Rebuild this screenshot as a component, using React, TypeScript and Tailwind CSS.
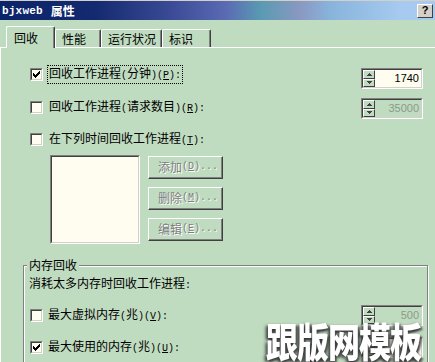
import React from "react";

const A = ({ children }: { children: React.ReactNode }) => (
  <span className="font-['Liberation_Mono',monospace] text-[10px]">{children}</span>
);

function Lbl({ main, inner, k }: { main: string; inner?: string; k: string }) {
  return (
    <span className="whitespace-nowrap">
      {main}
      {inner && (
        <>
          <A>(</A>
          {inner}
          <A>)</A>
        </>
      )}
      <A>
        (<u>{k}</u>):
      </A>
    </span>
  );
}

function Check({ checked }: { checked?: boolean }) {
  return (
    <div className="w-[13px] h-[13px] shrink-0 border border-t-[#808080] border-l-[#808080] border-b-white border-r-white">
      <div className="w-full h-full border border-t-[#404040] border-l-[#404040] border-b-[#d4d0c8] border-r-[#d4d0c8] bg-[#fffcf0] flex items-center justify-center">
        {checked && (
          <svg width="7" height="7" viewBox="0 0 7 7" shapeRendering="crispEdges">
            <path
              d="M6 0h1v1h-1z M5 1h2v1h-2z M0 2h1v1h-1z M4 2h3v1h-3z M0 3h2v1h-2z M3 3h3v1h-3z M0 4h5v1h-5z M1 5h3v1h-3z M2 6h1v1h-1z"
              fill="#000"
            />
          </svg>
        )}
      </div>
    </div>
  );
}

function SpinBtn({ up }: { up?: boolean }) {
  return (
    <div className="flex-1 border border-t-white border-l-white border-b-[#404040] border-r-[#404040] bg-[#c0dcc0] flex items-center justify-center">
      <svg width="5" height="3" viewBox="0 0 5 3" shapeRendering="crispEdges">
        {up ? <path d="M2 0h1v1h1v1h1v1H0V2h1V1h1z" fill="#404040" /> : <path d="M0 0h5v1H4v1H3v1H2V2H1V1H0z" fill="#404040" />}
      </svg>
    </div>
  );
}

function Spin({ value, disabled }: { value: string; disabled?: boolean }) {
  return (
    <div className="w-[62px] h-[21px] shrink-0 border border-t-[#808080] border-l-[#808080] border-b-white border-r-white">
      <div
        className={`h-full flex border border-t-[#404040] border-l-[#404040] border-b-[#d4d0c8] border-r-[#d4d0c8] ${
          disabled ? "bg-[#c0dcc0] text-[#8a9a8a]" : "bg-[#fffcf0] text-black"
        }`}
      >
        <div className="w-[12px] flex flex-col">
          <SpinBtn up />
          <SpinBtn />
        </div>
        <div className="flex-1 text-right pr-[2px] font-['Liberation_Sans',sans-serif] text-[11px] leading-[17px]">
          {value}
        </div>
      </div>
    </div>
  );
}

function Btn({ text, k }: { text: string; k: string }) {
  return (
    <div className="w-[75px] h-[23px] border border-t-white border-l-white border-b-[#404040] border-r-[#404040]">
      <div className="h-full border-b border-r border-b-[#808080] border-r-[#808080] flex items-center pl-[9px] text-[#808080] [text-shadow:1px_1px_0_#ffffff]">
        {text}
        <A>
          (<u>{k}</u>)...
        </A>
      </div>
    </div>
  );
}

function Tab({ label, active, w }: { label: string; active?: boolean; w: string }) {
  return (
    <div
      className={`${w} ${
        active ? "h-[22px] -mb-px relative z-10 pl-[7px] pt-[3px]" : "h-[18px] pl-[6px] pt-[1px]"
      } bg-[#c0dcc0] border-t border-l border-t-white border-l-white border-r border-r-[#404040] rounded-t-[2px] shadow-[inset_-1px_0_0_#808080] whitespace-nowrap`}
    >
      {label}
    </div>
  );
}

export default function App() {
  return (
    <div className="w-[435px] h-[362px] overflow-hidden relative bg-[#c0dcc0] text-black text-[12px] leading-[16px] font-['Noto_Sans_CJK_SC','Noto_Sans',sans-serif]">
      {/* title bar */}
      <div className="h-[20px] border-t border-t-[#d4d0c8] bg-[linear-gradient(to_right,#0a246a_0%,#142a70_22%,#3c4c98_40%,#5a6bb4_52%,#5a9ab2_60%,#8a98c2_69%,#88b4dc_76%,#a6caf0_92%,#a6caf0_100%)] flex items-center justify-between pl-[2px] pr-[2px]">
        <div className="flex items-center text-white font-bold">
          <span className="font-['Liberation_Mono',monospace] text-[11px] tracking-[0.2px]">bjxweb</span>
          <span className="ml-[8px] text-[12px]">属性</span>
        </div>
        <div className="w-[16px] h-[14px] bg-[#d4d0c8] border border-t-white border-l-white border-b-[#404040] border-r-[#404040] flex items-center justify-center font-['Liberation_Sans',sans-serif] font-bold text-[11px] leading-none">
          ?
        </div>
      </div>

      {/* tabs */}
      <div className="mt-[6px] h-[22px] flex items-end pl-[6px] border-b border-b-white">
        <Tab label="回收" active w="w-[49px]" />
        <Tab label="性能" w="w-[46px]" />
        <Tab label="运行状况" w="w-[61px]" />
        <Tab label="标识" w="w-[49px]" />
      </div>

      {/* panel */}
      <div className="border-l border-l-white pt-[17px]">
        {/* row 1 */}
        <div className="flex justify-between items-start pl-[29px] pr-[12px]">
          <div className="flex items-center h-[19px] gap-[4px]">
            <Check checked />
            <div className="h-[19px] border border-dotted border-black px-[1px] flex items-center">
              <Lbl main="回收工作进程" inner="分钟" k="P" />
            </div>
          </div>
          <div className="mt-[3px]">
            <Spin value="1740" />
          </div>
        </div>

        {/* row 2 */}
        <div className="mt-[9px] flex justify-between items-start pl-[29px] pr-[12px]">
          <div className="flex items-center h-[19px] gap-[4px]">
            <Check />
            <div className="h-[19px] border border-transparent px-[1px] flex items-center">
              <Lbl main="回收工作进程" inner="请求数目" k="R" />
            </div>
          </div>
          <Spin value="35000" disabled />
        </div>

        {/* row 3 */}
        <div className="mt-[11px] flex items-center h-[19px] gap-[4px] pl-[29px]">
          <Check />
          <div className="h-[19px] border border-transparent px-[1px] flex items-center">
            <Lbl main="在下列时间回收工作进程" k="T" />
          </div>
        </div>

        {/* list + buttons */}
        <div className="mt-[6px] flex items-start pl-[49px] gap-[8px]">
          <div className="w-[90px] h-[89px] border border-t-[#808080] border-l-[#808080] border-b-white border-r-white">
            <div className="w-full h-full border border-t-[#404040] border-l-[#404040] border-b-[#d4d0c8] border-r-[#d4d0c8] bg-[#fffcf0]" />
          </div>
          <div className="mt-[1px] flex flex-col gap-[8px]">
            <Btn text="添加" k="D" />
            <Btn text="删除" k="M" />
            <Btn text="编辑" k="E" />
          </div>
        </div>

        {/* group box */}
        <div className="mt-[21px] ml-[22px] mr-[7px] h-[120px] relative border border-[#808080] shadow-[inset_1px_1px_0_#ffffff,1px_1px_0_#ffffff] pl-[5px] pr-[4px] pt-[9px]">
          <div className="absolute -top-[9px] left-[3px] px-[2px] bg-[#c0dcc0]">内存回收</div>
          <div className="whitespace-nowrap">
            消耗太多内存时回收工作进程<A>:</A>
          </div>
          <div className="mt-[11px] flex justify-between items-center">
            <div className="flex items-center gap-[5px] ml-[1px]">
              <Check />
              <Lbl main="最大虚拟内存" inner="兆" k="V" />
            </div>
            <Spin value="500" disabled />
          </div>
          <div className="mt-[11px] flex justify-between items-center">
            <div className="flex items-center gap-[5px] ml-[1px]">
              <Check checked />
              <Lbl main="最大使用的内存" inner="兆" k="U" />
            </div>
            <Spin value="300" />
          </div>
        </div>
      </div>

      {/* watermark */}
      <div className="absolute left-[266px] top-[318px] origin-top scale-y-125 text-white font-black text-[32px] leading-[34px] tracking-[-1px] whitespace-nowrap [text-shadow:-2px_2px_3px_#333,2px_2px_2px_#555]">
        跟版网模板
      </div>
    </div>
  );
}
